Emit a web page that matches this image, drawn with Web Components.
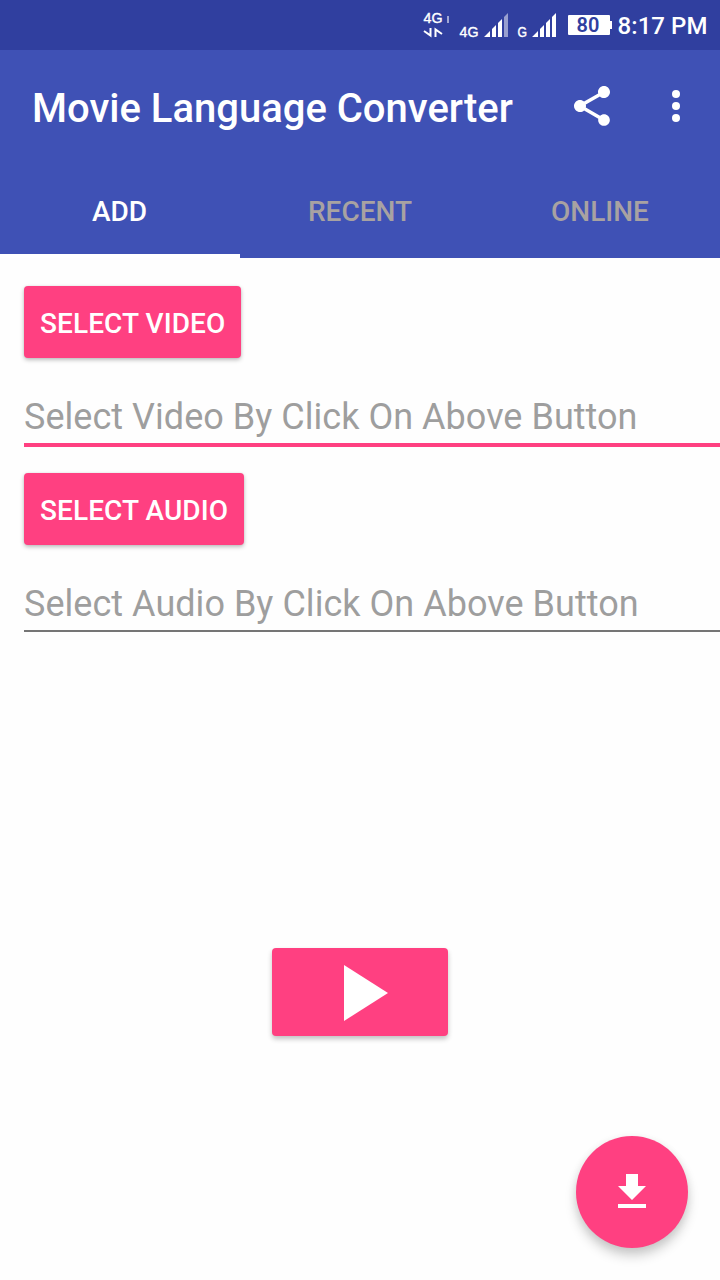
<!DOCTYPE html>
<html lang="en">
<head>
<meta charset="utf-8">
<title>Movie Language Converter</title>
<style>
html,body{margin:0;height:100%;background:#fefefe}
body{font-family:Roboto,"Noto Sans",sans-serif;overflow:hidden}
</style>
</head>
<body>
<movie-app></movie-app>
<script>
const define=(name,html)=>{
  const t=document.createElement('template');
  t.innerHTML=html;
  customElements.define(name,class extends HTMLElement{
    constructor(){super();this.attachShadow({mode:'open'}).append(t.content.cloneNode(true));}
  });
};

define('status-bar',`
<style>
:host{display:flex;align-items:center;justify-content:flex-end;height:50px;box-sizing:border-box;padding-right:6px;background:#303f9f;color:#fff}
svg{display:block;flex:none}
text{font:400 14px "Liberation Sans",sans-serif;fill:#fff;stroke:#fff;stroke-width:.4px}
.time{box-sizing:border-box;width:102px;font-size:24px;line-height:50px;font-weight:500;white-space:nowrap;padding:2px 0 0 5.500px;letter-spacing:.08px}
.battery{width:42px;height:20px;background:#fff;border-radius:1px;color:#303f9f;font-weight:600;font-size:20px;line-height:21px;text-align:center;box-sizing:border-box;padding-right:2px}
.nub{width:2px;height:8px;background:#fff}
.power{display:flex;align-items:center;margin-left:12px}
</style>
<svg width="136" height="50" viewBox="420 0 136 50">
  <text x="423.500" y="23" textLength="19" lengthAdjust="spacingAndGlyphs">4G</text>
  <path d="M447 16h2v7h-2z" fill="#fff" opacity=".55"/>
  <path d="M424 31l6.500 4.500V28M435.500 37v-7.500L442 34" fill="none" stroke="#fff" stroke-width="2"/>
  <text x="459.500" y="37" textLength="19" lengthAdjust="spacingAndGlyphs">4G</text>
  <path d="M484 37l6-6v6zM492 37v-8l4-4v12zM498 37V23l4-4v18z" fill="#fff"/>
  <path d="M504 37V17l4-4v24z" fill="#fff" opacity=".5"/>
  <text x="517.500" y="37" textLength="9.500" lengthAdjust="spacingAndGlyphs">G</text>
  <path d="M532 37l6-6v6zM540 37v-8l4-4v12zM546 37V23l4-4v18zM552 37V17l4-4v24z" fill="#fff"/>
</svg>
<div class="power"><div class="battery">80</div><div class="nub"></div></div>
<div class="time">8:17 PM</div>`);

define('app-bar',`
<style>
:host{display:flex;align-items:center;height:112px;padding:0 20px 0 32px;box-sizing:border-box;background:#3f51b5;color:#fff}
h1{margin:6px 0 0;flex:1;font-size:40px;line-height:48px;font-weight:500;white-space:nowrap}
svg{display:block;flex:none}
.share{margin-right:36px}
</style>
<h1><slot></slot></h1>
<svg class="share" width="48" height="48" viewBox="0 0 24 24" fill="#fff"><path d="M18 16.080c-.76 0-1.440.3-1.960.77L8.910 12.700c.05-.23.09-.46.09-.7s-.04-.47-.09-.7l7.050-4.110c.54.5 1.250.81 2.040.81 1.660 0 3-1.340 3-3s-1.340-3-3-3-3 1.340-3 3c0 .24.04.47.09.7L8.040 9.810C7.500 9.310 6.790 9 6 9c-1.660 0-3 1.340-3 3s1.340 3 3 3c.79 0 1.500-.31 2.040-.81l7.120 4.160c-.05.21-.08.43-.08.65 0 1.610 1.310 2.920 2.920 2.920s2.920-1.310 2.920-2.920-1.310-2.920-2.920-2.920z"/></svg>
<svg width="48" height="48" viewBox="0 0 24 24" fill="#fff"><circle cx="12" cy="6" r="2"/><circle cx="12" cy="12" r="2"/><circle cx="12" cy="18" r="2"/></svg>`);

define('tab-bar',`
<style>
:host{display:grid;grid-template-columns:repeat(3,1fr);height:96px;background:#3f51b5}
</style><slot></slot>`);

define('tab-item',`
<style>
:host{display:flex;align-items:center;justify-content:center;box-sizing:border-box;padding-top:8px;border-bottom:4px solid transparent;font-size:28px;line-height:32px;font-weight:500;color:#a8a2a2}
:host([selected]){color:#fff;border-color:#fff;padding-right:1px}
</style><slot></slot>`);

define('raised-button',`
<style>
:host{display:flex;align-items:center;justify-content:center;box-sizing:border-box;width:max-content;height:72px;padding:4px 16px 0;border-radius:4px;background:#ff4081;color:#fff;font-size:28px;line-height:32px;font-weight:500;letter-spacing:.08px;white-space:nowrap;box-shadow:0 2px 4px rgba(0,0,0,.26),0 0 2px rgba(0,0,0,.08)}
:host([play]){width:176px;height:88px;padding:0;box-shadow:0 3px 5px rgba(0,0,0,.24)}
::slotted(svg){display:block}
</style><slot></slot>`);

define('hint-field',`
<style>
:host{display:block;box-sizing:border-box;height:89px;padding-top:38px;border-bottom:4px solid #ff4081;color:#9e9e9e;font-size:36px;line-height:42px;letter-spacing:.03px;white-space:nowrap}
:host([idle]){border-bottom:2px solid #757575;height:87px}
</style><slot></slot>`);

define('download-fab',`
<style>
:host{display:flex;align-items:center;justify-content:center;width:112px;height:112px;border-radius:50%;background:#ff4081;box-shadow:0 8px 12px rgba(0,0,0,.18),0 2px 8px rgba(0,0,0,.08)}
svg{display:block}
</style>
<svg width="48" height="48" viewBox="0 0 24 24" fill="#fff"><path d="M19 9h-4V3H9v6H5l7 7 7-7zM5 18v2h14v-2H5z"/></svg>`);

define('movie-app',`
<style>
:host{display:flex;flex-direction:column;width:720px;height:1280px}
main{flex:1;display:flex;flex-direction:column;padding:28px 0 32px 24px;box-sizing:border-box}
.second{margin-top:26px}
.play{display:flex;justify-content:center;padding-right:24px;margin-top:316px}
.fab{display:flex;justify-content:flex-end;padding-right:32px;margin-top:auto}
</style>
<status-bar></status-bar>
<app-bar>Movie Language Converter</app-bar>
<tab-bar><tab-item selected>ADD</tab-item><tab-item>RECENT</tab-item><tab-item>ONLINE</tab-item></tab-bar>
<main>
  <raised-button>SELECT VIDEO</raised-button>
  <hint-field>Select Video By Click On Above Button</hint-field>
  <raised-button class="second">SELECT AUDIO</raised-button>
  <hint-field idle>Select Audio By Click On Above Button</hint-field>
  <div class="play"><raised-button play><svg width="44" height="56" viewBox="0 0 44 56" style="margin:2px 0 0 12px"><path d="M0 0l44 28L0 56z" fill="#fff"/></svg></raised-button></div>
  <div class="fab"><download-fab></download-fab></div>
</main>`);
</script>
</body>
</html>
